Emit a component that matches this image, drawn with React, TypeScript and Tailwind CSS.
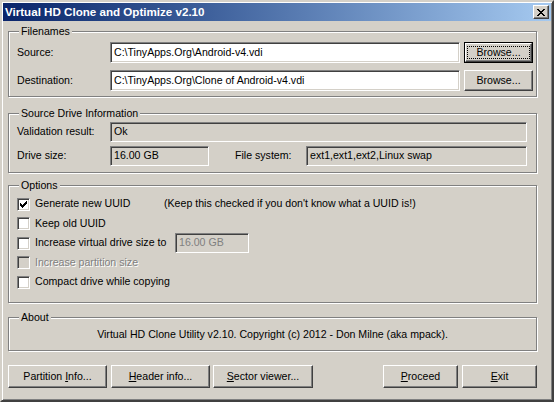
import React from "react";

const sunken =
  "border border-t-[#808080] border-l-[#808080] border-b-white border-r-white shadow-[inset_1px_1px_0_#404040,inset_-1px_-1px_0_#d4d0c8]";
const raised =
  "border border-t-white border-l-white border-b-[#404040] border-r-[#404040] shadow-[inset_-1px_-1px_0_#808080]";

function Group({ label, className, children }: { label: string; className: string; children?: React.ReactNode }) {
  return (
    <div
      className={
        "relative ml-[5px] w-[529px] border border-[#808080] shadow-[1px_1px_0_#fff,inset_1px_1px_0_#fff] " +
        className
      }
    >
      <span className="absolute left-[10px] -top-[7px] px-[2px] bg-[#d4d0c8] leading-[13px]">{label}</span>
      {children}
    </div>
  );
}

function Btn({ children, className }: { children: React.ReactNode; className: string }) {
  return (
    <div className={"flex items-center justify-center bg-[#d4d0c8] " + raised + " " + className}>
      <span className="leading-[13px]">{children}</span>
    </div>
  );
}

function CheckMark() {
  const px: [number, number][] = [
    [6, 0],
    [5, 1], [6, 1],
    [0, 2], [4, 2], [5, 2], [6, 2],
    [0, 3], [1, 3], [3, 3], [4, 3], [5, 3],
    [0, 4], [1, 4], [2, 4], [3, 4], [4, 4],
    [1, 5], [2, 5], [3, 5],
    [2, 6],
  ];
  return (
    <svg width="7" height="7" viewBox="0 0 7 7" shapeRendering="crispEdges" className="absolute left-[2px] top-[2px]">
      {px.map(([x, y], i) => (
        <rect key={i} x={x} y={y} width="1" height="1" fill="#000" />
      ))}
    </svg>
  );
}

function Check({ checked, disabled }: { checked?: boolean; disabled?: boolean }) {
  return (
    <div className={"relative w-[13px] h-[13px] shrink-0 " + sunken + (disabled ? " bg-[#d4d0c8]" : " bg-white")}>
      {checked && <CheckMark />}
    </div>
  );
}

function CloseX() {
  const px: [number, number][] = [
    [0, 0], [1, 0], [6, 0], [7, 0],
    [1, 1], [2, 1], [5, 1], [6, 1],
    [2, 2], [3, 2], [4, 2], [5, 2],
    [3, 3], [4, 3],
    [2, 4], [3, 4], [4, 4], [5, 4],
    [1, 5], [2, 5], [5, 5], [6, 5],
    [0, 6], [1, 6], [6, 6], [7, 6],
  ];
  return (
    <svg width="8" height="7" viewBox="0 0 8 7" shapeRendering="crispEdges">
      {px.map(([x, y], i) => (
        <rect key={i} x={x} y={y} width="1" height="1" fill="#000" />
      ))}
    </svg>
  );
}

export default function App() {
  return (
    <div className="w-[554px] h-[402px] bg-[#d4d0c8] text-black text-[10.6px] font-['Liberation_Sans',Arial,sans-serif] border-2 border-t-[#d4d0c8] border-l-[#d4d0c8] border-b-[#404040] border-r-[#404040] shadow-[inset_1px_1px_0_#fff,inset_-1px_-1px_0_#808080] p-px overflow-hidden">
      <div className="h-[18px] flex items-center bg-linear-to-r from-[#0a246a] to-[#a6caf0]">
        <span className="pl-[2px] text-white font-bold text-[11.6px] leading-[14px] flex-1">
          Virtual HD Clone and Optimize v2.10
        </span>
        <div className={"w-[16px] h-[14px] mr-[2px] flex items-center justify-center bg-[#d4d0c8] " + raised}>
          <CloseX />
        </div>
      </div>

      <Group label="Filenames" className="mt-[10px] h-[66px] pt-[10px] pl-[8px]">
        <div className="flex items-center h-[21px]">
          <span className="w-[93px]">Source:</span>
          <div className={"w-[350px] h-[21px] bg-white flex items-center pl-[3px] " + sunken}>
            C:\TinyApps.Org\Android-v4.vdi
          </div>
          <div className="ml-[4px] w-[69px] h-[21px] border border-black">
            <div className={"w-full h-full flex items-center justify-center bg-[#d4d0c8] " + raised}>
              <span className="border border-dotted border-black px-[8px] leading-[11px] h-[13px]">Browse...</span>
            </div>
          </div>
        </div>
        <div className="flex items-center h-[21px] mt-[7px]">
          <span className="w-[93px]">Destination:</span>
          <div className={"w-[350px] h-[21px] bg-white flex items-center pl-[3px] " + sunken}>
            C:\TinyApps.Org\Clone of Android-v4.vdi
          </div>
          <Btn className="ml-[4px] w-[69px] h-[21px]">Browse...</Btn>
        </div>
      </Group>

      <Group label="Source Drive Information" className="mt-[16px] h-[60px] pt-[8px] pl-[8px]">
        <div className="flex items-center h-[20px]">
          <span className="w-[93px]">Validation result:</span>
          <div className={"w-[417px] h-[20px] flex items-center pl-[3px] " + sunken}>Ok</div>
        </div>
        <div className="flex items-center h-[20px] mt-[4px]">
          <span className="w-[93px]">Drive size:</span>
          <div className={"w-[99px] h-[20px] flex items-center pl-[3px] " + sunken}>16.00 GB</div>
          <span className="ml-[26px] w-[71px]">File system:</span>
          <div className={"w-[221px] h-[20px] flex items-center pl-[3px] " + sunken}>
            ext1,ext1,ext2,Linux swap
          </div>
        </div>
      </Group>

      <Group label="Options" className="mt-[12px] h-[118px] pt-[8px] pl-[8px]">
        <div className="flex items-center h-[20px]">
          <Check checked />
          <span className="ml-[5px] w-[129px]">Generate new UUID</span>
          <span>(Keep this checked if you don't know what a UUID is!)</span>
        </div>
        <div className="flex items-center h-[19px]">
          <Check />
          <span className="ml-[5px]">Keep old UUID</span>
        </div>
        <div className="flex items-center h-[20px]">
          <Check />
          <span className="ml-[5px] w-[140px]">Increase virtual drive size to</span>
          <div className={"w-[74px] h-[20px] flex items-center pl-[3px] text-[#808080] " + sunken}>16.00 GB</div>
        </div>
        <div className="flex items-center h-[19px]">
          <Check disabled />
          <span className="ml-[5px] text-[#808080] [text-shadow:1px_1px_0_#fff]">Increase partition size</span>
        </div>
        <div className="flex items-center h-[20px]">
          <Check />
          <span className="ml-[5px]">Compact drive while copying</span>
        </div>
      </Group>

      <Group label="About" className="mt-[14px] h-[34px] flex items-center justify-center">
        <span className="pt-[1px]">Virtual HD Clone Utility v2.10. Copyright (c) 2012 - Don Milne (aka mpack).</span>
      </Group>

      <div className="flex mt-[14px] ml-[5px]">
        <Btn className="w-[99px] h-[23px]">
          Partition <u>I</u>nfo...
        </Btn>
        <Btn className="ml-[4px] w-[99px] h-[23px]">
          <u>H</u>eader info...
        </Btn>
        <Btn className="ml-[3px] w-[100px] h-[23px]">
          <u>S</u>ector viewer...
        </Btn>
        <Btn className="ml-[70px] w-[75px] h-[23px]">
          <u>P</u>roceed
        </Btn>
        <Btn className="ml-[4px] w-[75px] h-[23px]">
          <u>E</u>xit
        </Btn>
      </div>
    </div>
  );
}
